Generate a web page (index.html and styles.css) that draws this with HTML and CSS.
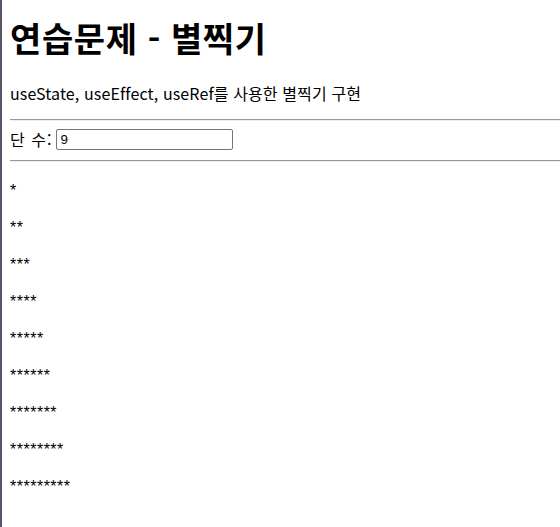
FILE: index.html
```html
<!DOCTYPE html>
<html lang="ko">
<head>
<meta charset="utf-8">
<title>연습문제 - 별찍기</title>
<link rel="stylesheet" href="styles.css">
</head>
<body>
<h1 class="title">연습문제 - 별찍기</h1>
<p class="desc">useState, useEffect, useRef를 사용한 별찍기 구현</p>
<hr class="rule">
<div class="control">
  <label class="label" for="dan">단 수:</label>
  <input class="field" id="dan" type="text" value="9">
</div>
<hr class="rule">
<div class="stars">
  <p class="row">*</p>
  <p class="row">**</p>
  <p class="row">***</p>
  <p class="row">****</p>
  <p class="row">*****</p>
  <p class="row">******</p>
  <p class="row">*******</p>
  <p class="row">********</p>
  <p class="row">*********</p>
</div>
</body>
</html>
```

FILE: styles.css
```css
html {
  border-left: 2px solid #5d5468;
  min-height: 100%;
  box-sizing: border-box;
}
body {
  margin: 0 0 8px 8px;
  padding-top: 0.02px;
  font-family: "Noto Sans CJK KR", "Noto Sans", sans-serif;
  font-size: 16px;
  line-height: 21px;
  color: #000;
  background: #fff;
}
.title {
  font-size: 34px;
  line-height: 42px;
  font-weight: 700;
  letter-spacing: 0.6px;
  margin: 17px 0 24px;
}
.desc {
  margin: 16px 0 15px;
  letter-spacing: 0.12px;
}
.rule {
  margin: 8px 0;
  border: none;
  border-top: 1px solid #9a9a9a;
  border-bottom: 1px solid #eeeeee;
  height: 0;
}
.control {
  display: flex;
  align-items: center;
  gap: 4px;
  margin: 8px 0 10px;
}
.label {
  letter-spacing: 1px;
}
.field {
  width: 177px;
  height: 21px;
  box-sizing: border-box;
  border: 1px solid #767676;
  border-radius: 2px;
  padding: 1px 3px;
  font-family: "Liberation Sans", Arial, sans-serif;
  font-size: 13.33px;
  margin: 0;
}
.stars {
  margin-top: 18px;
}
.row {
  margin: 16px 0;
  font-family: "Liberation Sans", Arial, sans-serif;
  letter-spacing: 0.5px;
}
```
